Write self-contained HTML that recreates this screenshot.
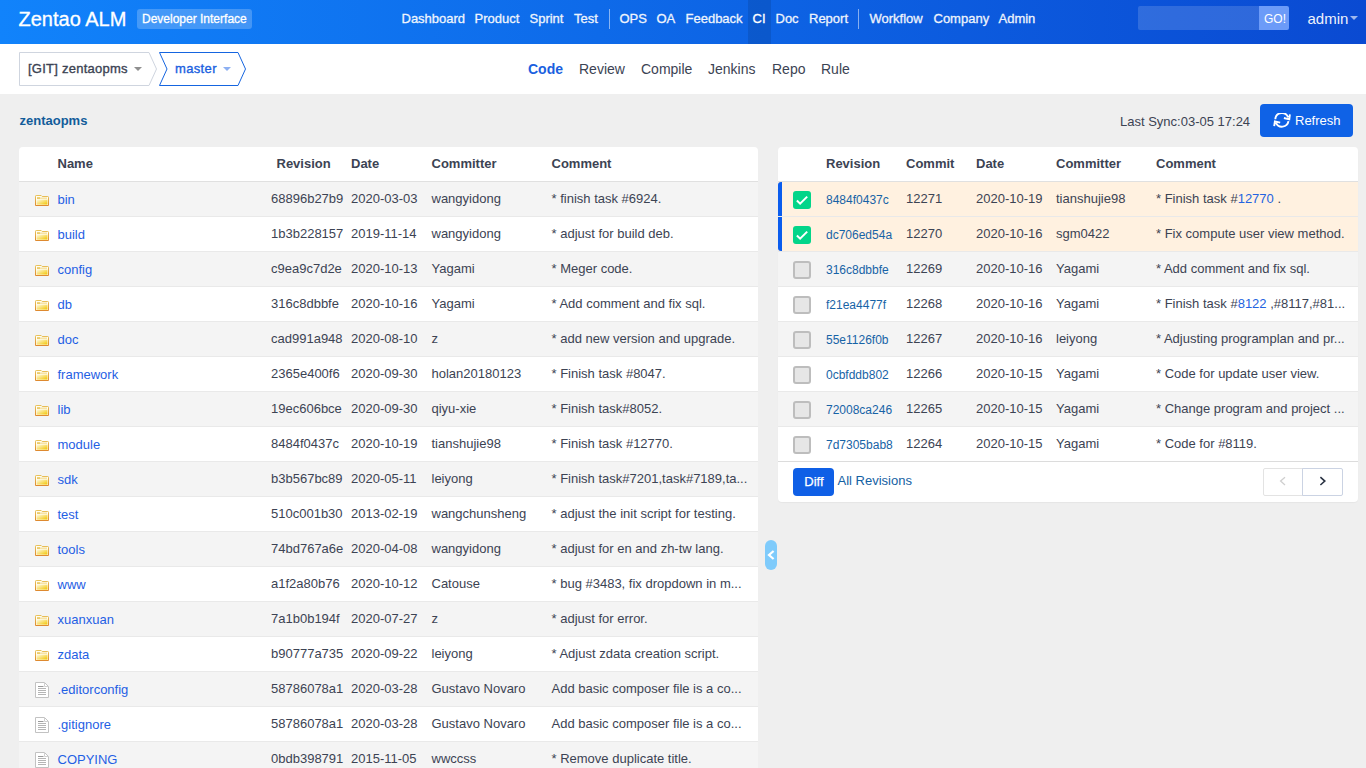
<!DOCTYPE html><html><head><meta charset="utf-8"><title>Zentao ALM - Code</title><style>
*{margin:0;padding:0;box-sizing:border-box}
html,body{width:1366px;height:768px;overflow:hidden}
body{background:#efefef;font-family:"Liberation Sans",sans-serif;position:relative;color:#3c4353}
.t{position:absolute;white-space:nowrap}
#hdr{position:absolute;left:0;top:0;width:1366px;height:44px;background:linear-gradient(90deg,#1183fb 0%,#0a4ad2 100%)}
.badge{position:absolute;left:137px;top:9px;width:115px;height:20px;border-radius:3px;background:rgba(255,255,255,.22)}
.ciact{position:absolute;left:748px;top:0;width:23px;height:44px;background:rgba(0,0,0,.1)}
.sep{position:absolute;top:9px;width:1px;height:20px;background:rgba(255,255,255,.5)}
.search{position:absolute;left:1138px;top:6px;width:121px;height:24px;background:rgba(255,255,255,.15);border-radius:2px 0 0 2px}
.go{position:absolute;left:1259px;top:6px;width:30px;height:24px;background:#6c9bf8;border-radius:0 2px 2px 0}
.caret{position:absolute;width:0;height:0;border-left:4px solid transparent;border-right:4px solid transparent;border-top:4px solid #999}
#sub{position:absolute;left:0;top:44px;width:1366px;height:50px;background:#fff}
.panel{position:absolute;top:147px;background:#fff;border-radius:4px;overflow:hidden}
#lp{left:19px;width:739px;height:640px}
#rp{left:778px;width:580px;height:355px;box-shadow:0 1px 1px rgba(0,0,0,.04)}
.hline{position:absolute;left:0;height:1px;background:#e0e0e0}
.row{position:absolute;left:0;height:35px;border-bottom:1px solid #e9e9e9}
.ico{position:absolute}
.selbar{position:absolute;left:0;width:4px;height:34px;background:#0a5cee}
.chk{position:absolute;width:18px;height:18px;border-radius:3px;background:#e6e6e6;border:2px solid #bdbdbd}
.chk.on{background:#03d589;border:none}
.chk svg{position:absolute;left:0;top:0}
.lk{color:#2463e0}
.btn-refresh{position:absolute;left:1260px;top:104px;width:93px;height:33px;border-radius:4px;background:#0f62e6}
.btn-diff{position:absolute;width:41px;height:28px;border-radius:4px;background:#0f5fe6}
.pager{position:absolute;width:79px;height:28px}
.pg{position:absolute;top:0;width:40px;height:28px;border:1px solid #e3e3e3}
.pl{border-radius:2px 0 0 2px}
.pr{border-radius:0 2px 2px 0;border-color:#cbd3e3}
.handle{position:absolute;left:765px;top:540px;width:12px;height:30px;border-radius:6px;background:#7fcbfb}
.handle svg{position:absolute;left:0;top:0}
</style></head><body><div id="hdr">
<div class="t" style="left:18.5px;top:9px;font-size:20px;line-height:20px;color:#fff;font-weight:normal;-webkit-text-stroke:0.3px #fff;">Zentao ALM</div>
<div class="badge"></div>
<div class="t" style="left:142px;top:13px;font-size:12px;line-height:12px;color:#fff;font-weight:normal;-webkit-text-stroke:0.3px #fff;">Developer Interface</div>
<div class="ciact"></div>
<div class="t" style="left:401.5px;top:12px;font-size:13px;line-height:13px;color:#fff;font-weight:normal;opacity:.93;-webkit-text-stroke:0.3px #fff;">Dashboard</div>
<div class="t" style="left:474.5px;top:12px;font-size:13px;line-height:13px;color:#fff;font-weight:normal;opacity:.93;-webkit-text-stroke:0.3px #fff;">Product</div>
<div class="t" style="left:529.5px;top:12px;font-size:13px;line-height:13px;color:#fff;font-weight:normal;opacity:.93;-webkit-text-stroke:0.3px #fff;">Sprint</div>
<div class="t" style="left:574px;top:12px;font-size:13px;line-height:13px;color:#fff;font-weight:normal;opacity:.93;-webkit-text-stroke:0.3px #fff;">Test</div>
<div class="t" style="left:619.5px;top:12px;font-size:13px;line-height:13px;color:#fff;font-weight:normal;opacity:.93;-webkit-text-stroke:0.3px #fff;">OPS</div>
<div class="t" style="left:656.5px;top:12px;font-size:13px;line-height:13px;color:#fff;font-weight:normal;opacity:.93;-webkit-text-stroke:0.3px #fff;">OA</div>
<div class="t" style="left:685.5px;top:12px;font-size:13px;line-height:13px;color:#fff;font-weight:normal;opacity:.93;-webkit-text-stroke:0.3px #fff;">Feedback</div>
<div class="t" style="left:752.5px;top:12px;font-size:13px;line-height:13px;color:#fff;font-weight:normal;-webkit-text-stroke:0.3px #fff;">CI</div>
<div class="t" style="left:775.5px;top:12px;font-size:13px;line-height:13px;color:#fff;font-weight:normal;opacity:.93;-webkit-text-stroke:0.3px #fff;">Doc</div>
<div class="t" style="left:809px;top:12px;font-size:13px;line-height:13px;color:#fff;font-weight:normal;opacity:.93;-webkit-text-stroke:0.3px #fff;">Report</div>
<div class="t" style="left:869.5px;top:12px;font-size:13px;line-height:13px;color:#fff;font-weight:normal;opacity:.93;-webkit-text-stroke:0.3px #fff;">Workflow</div>
<div class="t" style="left:933.5px;top:12px;font-size:13px;line-height:13px;color:#fff;font-weight:normal;opacity:.93;-webkit-text-stroke:0.3px #fff;">Company</div>
<div class="t" style="left:998.5px;top:12px;font-size:13px;line-height:13px;color:#fff;font-weight:normal;opacity:.93;-webkit-text-stroke:0.3px #fff;">Admin</div>
<div class="sep" style="left:608.5px"></div><div class="sep" style="left:858px"></div>
<div class="search"></div><div class="go"></div>
<div class="t" style="left:1264px;top:13px;font-size:12px;line-height:12px;color:#fff;font-weight:normal;">GO!</div>
<div class="t" style="left:1307.5px;top:11px;font-size:15px;line-height:15px;color:#fff;font-weight:normal;opacity:.93;">admin</div>
<div class="caret" style="left:1350px;top:16px;border-top-color:#9fb8ee"></div>
</div>
<div id="sub">
<svg class="crumbs" width="260" height="50" style="position:absolute;left:0;top:0"><path d="M19.5 8.5 H149 L156.5 25 L149 41.5 H19.5 Z" fill="#fff" stroke="#cfd5df" stroke-width="1"/><path d="M159.5 8.5 H238 L245.5 25 L238 41.5 H159.5 L167 25 Z" fill="#fff" stroke="#1565e0" stroke-width="1"/></svg>
<div class="t" style="left:28px;top:18px;font-size:13px;line-height:13px;color:#3c4353;font-weight:normal;-webkit-text-stroke:0.35px #3c4353;letter-spacing:0.25px;">[GIT] zentaopms</div>
<div class="caret" style="left:134px;top:23px;border-top-color:#8f8f8f"></div>
<div class="t" style="left:175px;top:18px;font-size:13px;line-height:13px;color:#1a5fe0;font-weight:normal;-webkit-text-stroke:0.35px #1a5fe0;letter-spacing:0.35px;">master</div>
<div class="caret" style="left:223px;top:23px;border-top-color:#8db0f2"></div>
<div class="t" style="left:528px;top:18px;font-size:14px;line-height:14px;color:#1a5fe0;font-weight:bold;">Code</div>
<div class="t" style="left:579px;top:18px;font-size:14px;line-height:14px;color:#3c4353;font-weight:normal;">Review</div>
<div class="t" style="left:641px;top:18px;font-size:14px;line-height:14px;color:#3c4353;font-weight:normal;">Compile</div>
<div class="t" style="left:708px;top:18px;font-size:14px;line-height:14px;color:#3c4353;font-weight:normal;">Jenkins</div>
<div class="t" style="left:772px;top:18px;font-size:14px;line-height:14px;color:#3c4353;font-weight:normal;">Repo</div>
<div class="t" style="left:821px;top:18px;font-size:14px;line-height:14px;color:#3c4353;font-weight:normal;">Rule</div>
</div>
<div class="t" style="left:19.5px;top:114px;font-size:13px;line-height:13px;color:#125c9a;font-weight:bold;">zentaopms</div>
<div class="t" style="left:1120px;top:115px;font-size:13px;line-height:13px;color:#3c4353;font-weight:normal;">Last Sync:03-05 17:24</div>
<div class="btn-refresh"><svg width="18" height="15" viewBox="0 0 18 15" style="position:absolute;left:13px;top:9px"><path d="M2.3 6.3 A6.6 6.6 0 0 1 15.1 4.4 M16.9 1.3 L16.3 6.3 L10.9 5.0 M15.5 8.2 A6.6 6.6 0 0 1 2.9 9.6 M1.2 13.2 L1.9 8.4 L7.2 9.6" fill="none" stroke="#fff" stroke-width="1.9"/></svg></div>
<div class="t" style="left:1295px;top:114px;font-size:13px;line-height:13px;color:#fff;font-weight:normal;">Refresh</div>
<div class="panel" id="lp">
<div class="t" style="left:38.5px;top:10px;font-size:13px;line-height:13px;color:#3c4353;font-weight:bold;">Name</div>
<div class="t" style="left:257.5px;top:10px;font-size:13px;line-height:13px;color:#3c4353;font-weight:bold;">Revision</div>
<div class="t" style="left:332px;top:10px;font-size:13px;line-height:13px;color:#3c4353;font-weight:bold;">Date</div>
<div class="t" style="left:412.5px;top:10px;font-size:13px;line-height:13px;color:#3c4353;font-weight:bold;">Committer</div>
<div class="t" style="left:532.5px;top:10px;font-size:13px;line-height:13px;color:#3c4353;font-weight:bold;">Comment</div>
<div class="hline" style="top:34px;width:739px"></div>
<div class="row" style="top:35px;width:739px;background:#f4f4f4"></div>
<svg class="ico" width="14" height="11" viewBox="0 0 14 11" style="left:16px;top:48px"><defs><linearGradient id="fs0" x1="0" y1="0" x2="0" y2="1"><stop offset="0" stop-color="#e8c25a"/><stop offset="1" stop-color="#de8a30"/></linearGradient><linearGradient id="fg0" x1="0" y1="0" x2="1" y2="1"><stop offset="0" stop-color="#fffbe6"/><stop offset="1" stop-color="#f1c400"/></linearGradient></defs><path d="M0.5 10.5 V1.2 Q0.5 0.5 1.2 0.5 H6.2 L7.2 1.5 H12.8 Q13.5 1.5 13.5 2.2 V10.5 Z" fill="#fffdf4" stroke="url(#fs0)" stroke-width="1"/><rect x="2" y="2.6" width="10" height="1.1" fill="#f2d784"/><rect x="2" y="2.2" width="3" height="1.9" fill="#eccb6a"/><rect x="1.5" y="4.6" width="11" height="5" fill="url(#fg0)"/></svg>
<div class="t" style="left:38.5px;top:46px;font-size:13px;line-height:13px;color:#1f60e4;font-weight:normal;">bin</div>
<div class="t" style="left:252px;top:45px;font-size:13px;line-height:13px;color:#3c4353;font-weight:normal;">68896b27b9</div>
<div class="t" style="left:332px;top:45px;font-size:13px;line-height:13px;color:#3c4353;font-weight:normal;">2020-03-03</div>
<div class="t" style="left:412.5px;top:45px;font-size:13px;line-height:13px;color:#3c4353;font-weight:normal;">wangyidong</div>
<div class="t" style="left:532.5px;top:45px;font-size:13px;line-height:13px;color:#3c4353;font-weight:normal;">* finish task #6924.</div>
<div class="row" style="top:70px;width:739px;background:#fff"></div>
<svg class="ico" width="14" height="11" viewBox="0 0 14 11" style="left:16px;top:83px"><defs><linearGradient id="fs1" x1="0" y1="0" x2="0" y2="1"><stop offset="0" stop-color="#e8c25a"/><stop offset="1" stop-color="#de8a30"/></linearGradient><linearGradient id="fg1" x1="0" y1="0" x2="1" y2="1"><stop offset="0" stop-color="#fffbe6"/><stop offset="1" stop-color="#f1c400"/></linearGradient></defs><path d="M0.5 10.5 V1.2 Q0.5 0.5 1.2 0.5 H6.2 L7.2 1.5 H12.8 Q13.5 1.5 13.5 2.2 V10.5 Z" fill="#fffdf4" stroke="url(#fs1)" stroke-width="1"/><rect x="2" y="2.6" width="10" height="1.1" fill="#f2d784"/><rect x="2" y="2.2" width="3" height="1.9" fill="#eccb6a"/><rect x="1.5" y="4.6" width="11" height="5" fill="url(#fg1)"/></svg>
<div class="t" style="left:38.5px;top:81px;font-size:13px;line-height:13px;color:#1f60e4;font-weight:normal;">build</div>
<div class="t" style="left:252px;top:80px;font-size:13px;line-height:13px;color:#3c4353;font-weight:normal;">1b3b228157</div>
<div class="t" style="left:332px;top:80px;font-size:13px;line-height:13px;color:#3c4353;font-weight:normal;">2019-11-14</div>
<div class="t" style="left:412.5px;top:80px;font-size:13px;line-height:13px;color:#3c4353;font-weight:normal;">wangyidong</div>
<div class="t" style="left:532.5px;top:80px;font-size:13px;line-height:13px;color:#3c4353;font-weight:normal;">* adjust for build deb.</div>
<div class="row" style="top:105px;width:739px;background:#f4f4f4"></div>
<svg class="ico" width="14" height="11" viewBox="0 0 14 11" style="left:16px;top:118px"><defs><linearGradient id="fs2" x1="0" y1="0" x2="0" y2="1"><stop offset="0" stop-color="#e8c25a"/><stop offset="1" stop-color="#de8a30"/></linearGradient><linearGradient id="fg2" x1="0" y1="0" x2="1" y2="1"><stop offset="0" stop-color="#fffbe6"/><stop offset="1" stop-color="#f1c400"/></linearGradient></defs><path d="M0.5 10.5 V1.2 Q0.5 0.5 1.2 0.5 H6.2 L7.2 1.5 H12.8 Q13.5 1.5 13.5 2.2 V10.5 Z" fill="#fffdf4" stroke="url(#fs2)" stroke-width="1"/><rect x="2" y="2.6" width="10" height="1.1" fill="#f2d784"/><rect x="2" y="2.2" width="3" height="1.9" fill="#eccb6a"/><rect x="1.5" y="4.6" width="11" height="5" fill="url(#fg2)"/></svg>
<div class="t" style="left:38.5px;top:116px;font-size:13px;line-height:13px;color:#1f60e4;font-weight:normal;">config</div>
<div class="t" style="left:252px;top:115px;font-size:13px;line-height:13px;color:#3c4353;font-weight:normal;">c9ea9c7d2e</div>
<div class="t" style="left:332px;top:115px;font-size:13px;line-height:13px;color:#3c4353;font-weight:normal;">2020-10-13</div>
<div class="t" style="left:412.5px;top:115px;font-size:13px;line-height:13px;color:#3c4353;font-weight:normal;">Yagami</div>
<div class="t" style="left:532.5px;top:115px;font-size:13px;line-height:13px;color:#3c4353;font-weight:normal;">* Meger code.</div>
<div class="row" style="top:140px;width:739px;background:#fff"></div>
<svg class="ico" width="14" height="11" viewBox="0 0 14 11" style="left:16px;top:153px"><defs><linearGradient id="fs3" x1="0" y1="0" x2="0" y2="1"><stop offset="0" stop-color="#e8c25a"/><stop offset="1" stop-color="#de8a30"/></linearGradient><linearGradient id="fg3" x1="0" y1="0" x2="1" y2="1"><stop offset="0" stop-color="#fffbe6"/><stop offset="1" stop-color="#f1c400"/></linearGradient></defs><path d="M0.5 10.5 V1.2 Q0.5 0.5 1.2 0.5 H6.2 L7.2 1.5 H12.8 Q13.5 1.5 13.5 2.2 V10.5 Z" fill="#fffdf4" stroke="url(#fs3)" stroke-width="1"/><rect x="2" y="2.6" width="10" height="1.1" fill="#f2d784"/><rect x="2" y="2.2" width="3" height="1.9" fill="#eccb6a"/><rect x="1.5" y="4.6" width="11" height="5" fill="url(#fg3)"/></svg>
<div class="t" style="left:38.5px;top:151px;font-size:13px;line-height:13px;color:#1f60e4;font-weight:normal;">db</div>
<div class="t" style="left:252px;top:150px;font-size:13px;line-height:13px;color:#3c4353;font-weight:normal;">316c8dbbfe</div>
<div class="t" style="left:332px;top:150px;font-size:13px;line-height:13px;color:#3c4353;font-weight:normal;">2020-10-16</div>
<div class="t" style="left:412.5px;top:150px;font-size:13px;line-height:13px;color:#3c4353;font-weight:normal;">Yagami</div>
<div class="t" style="left:532.5px;top:150px;font-size:13px;line-height:13px;color:#3c4353;font-weight:normal;">* Add comment and fix sql.</div>
<div class="row" style="top:175px;width:739px;background:#f4f4f4"></div>
<svg class="ico" width="14" height="11" viewBox="0 0 14 11" style="left:16px;top:188px"><defs><linearGradient id="fs4" x1="0" y1="0" x2="0" y2="1"><stop offset="0" stop-color="#e8c25a"/><stop offset="1" stop-color="#de8a30"/></linearGradient><linearGradient id="fg4" x1="0" y1="0" x2="1" y2="1"><stop offset="0" stop-color="#fffbe6"/><stop offset="1" stop-color="#f1c400"/></linearGradient></defs><path d="M0.5 10.5 V1.2 Q0.5 0.5 1.2 0.5 H6.2 L7.2 1.5 H12.8 Q13.5 1.5 13.5 2.2 V10.5 Z" fill="#fffdf4" stroke="url(#fs4)" stroke-width="1"/><rect x="2" y="2.6" width="10" height="1.1" fill="#f2d784"/><rect x="2" y="2.2" width="3" height="1.9" fill="#eccb6a"/><rect x="1.5" y="4.6" width="11" height="5" fill="url(#fg4)"/></svg>
<div class="t" style="left:38.5px;top:186px;font-size:13px;line-height:13px;color:#1f60e4;font-weight:normal;">doc</div>
<div class="t" style="left:252px;top:185px;font-size:13px;line-height:13px;color:#3c4353;font-weight:normal;">cad991a948</div>
<div class="t" style="left:332px;top:185px;font-size:13px;line-height:13px;color:#3c4353;font-weight:normal;">2020-08-10</div>
<div class="t" style="left:412.5px;top:185px;font-size:13px;line-height:13px;color:#3c4353;font-weight:normal;">z</div>
<div class="t" style="left:532.5px;top:185px;font-size:13px;line-height:13px;color:#3c4353;font-weight:normal;">* add new version and upgrade.</div>
<div class="row" style="top:210px;width:739px;background:#fff"></div>
<svg class="ico" width="14" height="11" viewBox="0 0 14 11" style="left:16px;top:223px"><defs><linearGradient id="fs5" x1="0" y1="0" x2="0" y2="1"><stop offset="0" stop-color="#e8c25a"/><stop offset="1" stop-color="#de8a30"/></linearGradient><linearGradient id="fg5" x1="0" y1="0" x2="1" y2="1"><stop offset="0" stop-color="#fffbe6"/><stop offset="1" stop-color="#f1c400"/></linearGradient></defs><path d="M0.5 10.5 V1.2 Q0.5 0.5 1.2 0.5 H6.2 L7.2 1.5 H12.8 Q13.5 1.5 13.5 2.2 V10.5 Z" fill="#fffdf4" stroke="url(#fs5)" stroke-width="1"/><rect x="2" y="2.6" width="10" height="1.1" fill="#f2d784"/><rect x="2" y="2.2" width="3" height="1.9" fill="#eccb6a"/><rect x="1.5" y="4.6" width="11" height="5" fill="url(#fg5)"/></svg>
<div class="t" style="left:38.5px;top:221px;font-size:13px;line-height:13px;color:#1f60e4;font-weight:normal;">framework</div>
<div class="t" style="left:252px;top:220px;font-size:13px;line-height:13px;color:#3c4353;font-weight:normal;">2365e400f6</div>
<div class="t" style="left:332px;top:220px;font-size:13px;line-height:13px;color:#3c4353;font-weight:normal;">2020-09-30</div>
<div class="t" style="left:412.5px;top:220px;font-size:13px;line-height:13px;color:#3c4353;font-weight:normal;">holan20180123</div>
<div class="t" style="left:532.5px;top:220px;font-size:13px;line-height:13px;color:#3c4353;font-weight:normal;">* Finish task #8047.</div>
<div class="row" style="top:245px;width:739px;background:#f4f4f4"></div>
<svg class="ico" width="14" height="11" viewBox="0 0 14 11" style="left:16px;top:258px"><defs><linearGradient id="fs6" x1="0" y1="0" x2="0" y2="1"><stop offset="0" stop-color="#e8c25a"/><stop offset="1" stop-color="#de8a30"/></linearGradient><linearGradient id="fg6" x1="0" y1="0" x2="1" y2="1"><stop offset="0" stop-color="#fffbe6"/><stop offset="1" stop-color="#f1c400"/></linearGradient></defs><path d="M0.5 10.5 V1.2 Q0.5 0.5 1.2 0.5 H6.2 L7.2 1.5 H12.8 Q13.5 1.5 13.5 2.2 V10.5 Z" fill="#fffdf4" stroke="url(#fs6)" stroke-width="1"/><rect x="2" y="2.6" width="10" height="1.1" fill="#f2d784"/><rect x="2" y="2.2" width="3" height="1.9" fill="#eccb6a"/><rect x="1.5" y="4.6" width="11" height="5" fill="url(#fg6)"/></svg>
<div class="t" style="left:38.5px;top:256px;font-size:13px;line-height:13px;color:#1f60e4;font-weight:normal;">lib</div>
<div class="t" style="left:252px;top:255px;font-size:13px;line-height:13px;color:#3c4353;font-weight:normal;">19ec606bce</div>
<div class="t" style="left:332px;top:255px;font-size:13px;line-height:13px;color:#3c4353;font-weight:normal;">2020-09-30</div>
<div class="t" style="left:412.5px;top:255px;font-size:13px;line-height:13px;color:#3c4353;font-weight:normal;">qiyu-xie</div>
<div class="t" style="left:532.5px;top:255px;font-size:13px;line-height:13px;color:#3c4353;font-weight:normal;">* Finish task#8052.</div>
<div class="row" style="top:280px;width:739px;background:#fff"></div>
<svg class="ico" width="14" height="11" viewBox="0 0 14 11" style="left:16px;top:293px"><defs><linearGradient id="fs7" x1="0" y1="0" x2="0" y2="1"><stop offset="0" stop-color="#e8c25a"/><stop offset="1" stop-color="#de8a30"/></linearGradient><linearGradient id="fg7" x1="0" y1="0" x2="1" y2="1"><stop offset="0" stop-color="#fffbe6"/><stop offset="1" stop-color="#f1c400"/></linearGradient></defs><path d="M0.5 10.5 V1.2 Q0.5 0.5 1.2 0.5 H6.2 L7.2 1.5 H12.8 Q13.5 1.5 13.5 2.2 V10.5 Z" fill="#fffdf4" stroke="url(#fs7)" stroke-width="1"/><rect x="2" y="2.6" width="10" height="1.1" fill="#f2d784"/><rect x="2" y="2.2" width="3" height="1.9" fill="#eccb6a"/><rect x="1.5" y="4.6" width="11" height="5" fill="url(#fg7)"/></svg>
<div class="t" style="left:38.5px;top:291px;font-size:13px;line-height:13px;color:#1f60e4;font-weight:normal;">module</div>
<div class="t" style="left:252px;top:290px;font-size:13px;line-height:13px;color:#3c4353;font-weight:normal;">8484f0437c</div>
<div class="t" style="left:332px;top:290px;font-size:13px;line-height:13px;color:#3c4353;font-weight:normal;">2020-10-19</div>
<div class="t" style="left:412.5px;top:290px;font-size:13px;line-height:13px;color:#3c4353;font-weight:normal;">tianshujie98</div>
<div class="t" style="left:532.5px;top:290px;font-size:13px;line-height:13px;color:#3c4353;font-weight:normal;">* Finish task #12770.</div>
<div class="row" style="top:315px;width:739px;background:#f4f4f4"></div>
<svg class="ico" width="14" height="11" viewBox="0 0 14 11" style="left:16px;top:328px"><defs><linearGradient id="fs8" x1="0" y1="0" x2="0" y2="1"><stop offset="0" stop-color="#e8c25a"/><stop offset="1" stop-color="#de8a30"/></linearGradient><linearGradient id="fg8" x1="0" y1="0" x2="1" y2="1"><stop offset="0" stop-color="#fffbe6"/><stop offset="1" stop-color="#f1c400"/></linearGradient></defs><path d="M0.5 10.5 V1.2 Q0.5 0.5 1.2 0.5 H6.2 L7.2 1.5 H12.8 Q13.5 1.5 13.5 2.2 V10.5 Z" fill="#fffdf4" stroke="url(#fs8)" stroke-width="1"/><rect x="2" y="2.6" width="10" height="1.1" fill="#f2d784"/><rect x="2" y="2.2" width="3" height="1.9" fill="#eccb6a"/><rect x="1.5" y="4.6" width="11" height="5" fill="url(#fg8)"/></svg>
<div class="t" style="left:38.5px;top:326px;font-size:13px;line-height:13px;color:#1f60e4;font-weight:normal;">sdk</div>
<div class="t" style="left:252px;top:325px;font-size:13px;line-height:13px;color:#3c4353;font-weight:normal;">b3b567bc89</div>
<div class="t" style="left:332px;top:325px;font-size:13px;line-height:13px;color:#3c4353;font-weight:normal;">2020-05-11</div>
<div class="t" style="left:412.5px;top:325px;font-size:13px;line-height:13px;color:#3c4353;font-weight:normal;">leiyong</div>
<div class="t" style="left:532.5px;top:325px;font-size:13px;line-height:13px;color:#3c4353;font-weight:normal;">* Finish task#7201,task#7189,ta...</div>
<div class="row" style="top:350px;width:739px;background:#fff"></div>
<svg class="ico" width="14" height="11" viewBox="0 0 14 11" style="left:16px;top:363px"><defs><linearGradient id="fs9" x1="0" y1="0" x2="0" y2="1"><stop offset="0" stop-color="#e8c25a"/><stop offset="1" stop-color="#de8a30"/></linearGradient><linearGradient id="fg9" x1="0" y1="0" x2="1" y2="1"><stop offset="0" stop-color="#fffbe6"/><stop offset="1" stop-color="#f1c400"/></linearGradient></defs><path d="M0.5 10.5 V1.2 Q0.5 0.5 1.2 0.5 H6.2 L7.2 1.5 H12.8 Q13.5 1.5 13.5 2.2 V10.5 Z" fill="#fffdf4" stroke="url(#fs9)" stroke-width="1"/><rect x="2" y="2.6" width="10" height="1.1" fill="#f2d784"/><rect x="2" y="2.2" width="3" height="1.9" fill="#eccb6a"/><rect x="1.5" y="4.6" width="11" height="5" fill="url(#fg9)"/></svg>
<div class="t" style="left:38.5px;top:361px;font-size:13px;line-height:13px;color:#1f60e4;font-weight:normal;">test</div>
<div class="t" style="left:252px;top:360px;font-size:13px;line-height:13px;color:#3c4353;font-weight:normal;">510c001b30</div>
<div class="t" style="left:332px;top:360px;font-size:13px;line-height:13px;color:#3c4353;font-weight:normal;">2013-02-19</div>
<div class="t" style="left:412.5px;top:360px;font-size:13px;line-height:13px;color:#3c4353;font-weight:normal;">wangchunsheng</div>
<div class="t" style="left:532.5px;top:360px;font-size:13px;line-height:13px;color:#3c4353;font-weight:normal;">* adjust the init script for testing.</div>
<div class="row" style="top:385px;width:739px;background:#f4f4f4"></div>
<svg class="ico" width="14" height="11" viewBox="0 0 14 11" style="left:16px;top:398px"><defs><linearGradient id="fs10" x1="0" y1="0" x2="0" y2="1"><stop offset="0" stop-color="#e8c25a"/><stop offset="1" stop-color="#de8a30"/></linearGradient><linearGradient id="fg10" x1="0" y1="0" x2="1" y2="1"><stop offset="0" stop-color="#fffbe6"/><stop offset="1" stop-color="#f1c400"/></linearGradient></defs><path d="M0.5 10.5 V1.2 Q0.5 0.5 1.2 0.5 H6.2 L7.2 1.5 H12.8 Q13.5 1.5 13.5 2.2 V10.5 Z" fill="#fffdf4" stroke="url(#fs10)" stroke-width="1"/><rect x="2" y="2.6" width="10" height="1.1" fill="#f2d784"/><rect x="2" y="2.2" width="3" height="1.9" fill="#eccb6a"/><rect x="1.5" y="4.6" width="11" height="5" fill="url(#fg10)"/></svg>
<div class="t" style="left:38.5px;top:396px;font-size:13px;line-height:13px;color:#1f60e4;font-weight:normal;">tools</div>
<div class="t" style="left:252px;top:395px;font-size:13px;line-height:13px;color:#3c4353;font-weight:normal;">74bd767a6e</div>
<div class="t" style="left:332px;top:395px;font-size:13px;line-height:13px;color:#3c4353;font-weight:normal;">2020-04-08</div>
<div class="t" style="left:412.5px;top:395px;font-size:13px;line-height:13px;color:#3c4353;font-weight:normal;">wangyidong</div>
<div class="t" style="left:532.5px;top:395px;font-size:13px;line-height:13px;color:#3c4353;font-weight:normal;">* adjust for en and zh-tw lang.</div>
<div class="row" style="top:420px;width:739px;background:#fff"></div>
<svg class="ico" width="14" height="11" viewBox="0 0 14 11" style="left:16px;top:433px"><defs><linearGradient id="fs11" x1="0" y1="0" x2="0" y2="1"><stop offset="0" stop-color="#e8c25a"/><stop offset="1" stop-color="#de8a30"/></linearGradient><linearGradient id="fg11" x1="0" y1="0" x2="1" y2="1"><stop offset="0" stop-color="#fffbe6"/><stop offset="1" stop-color="#f1c400"/></linearGradient></defs><path d="M0.5 10.5 V1.2 Q0.5 0.5 1.2 0.5 H6.2 L7.2 1.5 H12.8 Q13.5 1.5 13.5 2.2 V10.5 Z" fill="#fffdf4" stroke="url(#fs11)" stroke-width="1"/><rect x="2" y="2.6" width="10" height="1.1" fill="#f2d784"/><rect x="2" y="2.2" width="3" height="1.9" fill="#eccb6a"/><rect x="1.5" y="4.6" width="11" height="5" fill="url(#fg11)"/></svg>
<div class="t" style="left:38.5px;top:431px;font-size:13px;line-height:13px;color:#1f60e4;font-weight:normal;">www</div>
<div class="t" style="left:252px;top:430px;font-size:13px;line-height:13px;color:#3c4353;font-weight:normal;">a1f2a80b76</div>
<div class="t" style="left:332px;top:430px;font-size:13px;line-height:13px;color:#3c4353;font-weight:normal;">2020-10-12</div>
<div class="t" style="left:412.5px;top:430px;font-size:13px;line-height:13px;color:#3c4353;font-weight:normal;">Catouse</div>
<div class="t" style="left:532.5px;top:430px;font-size:13px;line-height:13px;color:#3c4353;font-weight:normal;">* bug #3483, fix dropdown in m...</div>
<div class="row" style="top:455px;width:739px;background:#f4f4f4"></div>
<svg class="ico" width="14" height="11" viewBox="0 0 14 11" style="left:16px;top:468px"><defs><linearGradient id="fs12" x1="0" y1="0" x2="0" y2="1"><stop offset="0" stop-color="#e8c25a"/><stop offset="1" stop-color="#de8a30"/></linearGradient><linearGradient id="fg12" x1="0" y1="0" x2="1" y2="1"><stop offset="0" stop-color="#fffbe6"/><stop offset="1" stop-color="#f1c400"/></linearGradient></defs><path d="M0.5 10.5 V1.2 Q0.5 0.5 1.2 0.5 H6.2 L7.2 1.5 H12.8 Q13.5 1.5 13.5 2.2 V10.5 Z" fill="#fffdf4" stroke="url(#fs12)" stroke-width="1"/><rect x="2" y="2.6" width="10" height="1.1" fill="#f2d784"/><rect x="2" y="2.2" width="3" height="1.9" fill="#eccb6a"/><rect x="1.5" y="4.6" width="11" height="5" fill="url(#fg12)"/></svg>
<div class="t" style="left:38.5px;top:466px;font-size:13px;line-height:13px;color:#1f60e4;font-weight:normal;">xuanxuan</div>
<div class="t" style="left:252px;top:465px;font-size:13px;line-height:13px;color:#3c4353;font-weight:normal;">7a1b0b194f</div>
<div class="t" style="left:332px;top:465px;font-size:13px;line-height:13px;color:#3c4353;font-weight:normal;">2020-07-27</div>
<div class="t" style="left:412.5px;top:465px;font-size:13px;line-height:13px;color:#3c4353;font-weight:normal;">z</div>
<div class="t" style="left:532.5px;top:465px;font-size:13px;line-height:13px;color:#3c4353;font-weight:normal;">* adjust for error.</div>
<div class="row" style="top:490px;width:739px;background:#fff"></div>
<svg class="ico" width="14" height="11" viewBox="0 0 14 11" style="left:16px;top:503px"><defs><linearGradient id="fs13" x1="0" y1="0" x2="0" y2="1"><stop offset="0" stop-color="#e8c25a"/><stop offset="1" stop-color="#de8a30"/></linearGradient><linearGradient id="fg13" x1="0" y1="0" x2="1" y2="1"><stop offset="0" stop-color="#fffbe6"/><stop offset="1" stop-color="#f1c400"/></linearGradient></defs><path d="M0.5 10.5 V1.2 Q0.5 0.5 1.2 0.5 H6.2 L7.2 1.5 H12.8 Q13.5 1.5 13.5 2.2 V10.5 Z" fill="#fffdf4" stroke="url(#fs13)" stroke-width="1"/><rect x="2" y="2.6" width="10" height="1.1" fill="#f2d784"/><rect x="2" y="2.2" width="3" height="1.9" fill="#eccb6a"/><rect x="1.5" y="4.6" width="11" height="5" fill="url(#fg13)"/></svg>
<div class="t" style="left:38.5px;top:501px;font-size:13px;line-height:13px;color:#1f60e4;font-weight:normal;">zdata</div>
<div class="t" style="left:252px;top:500px;font-size:13px;line-height:13px;color:#3c4353;font-weight:normal;">b90777a735</div>
<div class="t" style="left:332px;top:500px;font-size:13px;line-height:13px;color:#3c4353;font-weight:normal;">2020-09-22</div>
<div class="t" style="left:412.5px;top:500px;font-size:13px;line-height:13px;color:#3c4353;font-weight:normal;">leiyong</div>
<div class="t" style="left:532.5px;top:500px;font-size:13px;line-height:13px;color:#3c4353;font-weight:normal;">* Adjust zdata creation script.</div>
<div class="row" style="top:525px;width:739px;background:#f4f4f4"></div>
<svg class="ico" width="14" height="16" viewBox="0 0 14 16" style="left:16px;top:535px"><path d="M0.5 0.5 H9.5 L13.5 4.5 V15.5 H0.5 Z" fill="#fff" stroke="#c2c2c2" stroke-width="1"/><path d="M9.5 0.5 V4.5 H13.5" fill="none" stroke="#d0d0d0" stroke-width="1"/><path d="M3 4.5 H8.5" stroke="#999" stroke-width="1"/><path d="M3 6.5 H11 M3 8.5 H11 M3 10.5 H11 M3 12.5 H11" stroke="#b5b5b5" stroke-width="1"/></svg>
<div class="t" style="left:38.5px;top:536px;font-size:13px;line-height:13px;color:#1f60e4;font-weight:normal;">.editorconfig</div>
<div class="t" style="left:252px;top:535px;font-size:13px;line-height:13px;color:#3c4353;font-weight:normal;">58786078a1</div>
<div class="t" style="left:332px;top:535px;font-size:13px;line-height:13px;color:#3c4353;font-weight:normal;">2020-03-28</div>
<div class="t" style="left:412.5px;top:535px;font-size:13px;line-height:13px;color:#3c4353;font-weight:normal;">Gustavo Novaro</div>
<div class="t" style="left:532.5px;top:535px;font-size:13px;line-height:13px;color:#3c4353;font-weight:normal;">Add basic composer file is a co...</div>
<div class="row" style="top:560px;width:739px;background:#fff"></div>
<svg class="ico" width="14" height="16" viewBox="0 0 14 16" style="left:16px;top:570px"><path d="M0.5 0.5 H9.5 L13.5 4.5 V15.5 H0.5 Z" fill="#fff" stroke="#c2c2c2" stroke-width="1"/><path d="M9.5 0.5 V4.5 H13.5" fill="none" stroke="#d0d0d0" stroke-width="1"/><path d="M3 4.5 H8.5" stroke="#999" stroke-width="1"/><path d="M3 6.5 H11 M3 8.5 H11 M3 10.5 H11 M3 12.5 H11" stroke="#b5b5b5" stroke-width="1"/></svg>
<div class="t" style="left:38.5px;top:571px;font-size:13px;line-height:13px;color:#1f60e4;font-weight:normal;">.gitignore</div>
<div class="t" style="left:252px;top:570px;font-size:13px;line-height:13px;color:#3c4353;font-weight:normal;">58786078a1</div>
<div class="t" style="left:332px;top:570px;font-size:13px;line-height:13px;color:#3c4353;font-weight:normal;">2020-03-28</div>
<div class="t" style="left:412.5px;top:570px;font-size:13px;line-height:13px;color:#3c4353;font-weight:normal;">Gustavo Novaro</div>
<div class="t" style="left:532.5px;top:570px;font-size:13px;line-height:13px;color:#3c4353;font-weight:normal;">Add basic composer file is a co...</div>
<div class="row" style="top:595px;width:739px;background:#f4f4f4"></div>
<svg class="ico" width="14" height="16" viewBox="0 0 14 16" style="left:16px;top:605px"><path d="M0.5 0.5 H9.5 L13.5 4.5 V15.5 H0.5 Z" fill="#fff" stroke="#c2c2c2" stroke-width="1"/><path d="M9.5 0.5 V4.5 H13.5" fill="none" stroke="#d0d0d0" stroke-width="1"/><path d="M3 4.5 H8.5" stroke="#999" stroke-width="1"/><path d="M3 6.5 H11 M3 8.5 H11 M3 10.5 H11 M3 12.5 H11" stroke="#b5b5b5" stroke-width="1"/></svg>
<div class="t" style="left:38.5px;top:606px;font-size:13px;line-height:13px;color:#1f60e4;font-weight:normal;">COPYING</div>
<div class="t" style="left:252px;top:605px;font-size:13px;line-height:13px;color:#3c4353;font-weight:normal;">0bdb398791</div>
<div class="t" style="left:332px;top:605px;font-size:13px;line-height:13px;color:#3c4353;font-weight:normal;">2015-11-05</div>
<div class="t" style="left:412.5px;top:605px;font-size:13px;line-height:13px;color:#3c4353;font-weight:normal;">wwccss</div>
<div class="t" style="left:532.5px;top:605px;font-size:13px;line-height:13px;color:#3c4353;font-weight:normal;">* Remove duplicate title.</div>
</div>
<div class="panel" id="rp">
<div class="t" style="left:48px;top:10px;font-size:13px;line-height:13px;color:#3c4353;font-weight:bold;">Revision</div>
<div class="t" style="left:128px;top:10px;font-size:13px;line-height:13px;color:#3c4353;font-weight:bold;">Commit</div>
<div class="t" style="left:198px;top:10px;font-size:13px;line-height:13px;color:#3c4353;font-weight:bold;">Date</div>
<div class="t" style="left:278px;top:10px;font-size:13px;line-height:13px;color:#3c4353;font-weight:bold;">Committer</div>
<div class="t" style="left:378px;top:10px;font-size:13px;line-height:13px;color:#3c4353;font-weight:bold;">Comment</div>
<div class="hline" style="top:34px;width:580px"></div>
<div class="row" style="top:35px;width:580px;background:#fff1e0"></div>
<div class="selbar" style="top:35px;border-radius:3px 0 0 0"></div>
<div class="chk on" style="left:15px;top:44px"><svg width="18" height="18" viewBox="0 0 18 18"><path d="M3.9 9.5 L7.1 12.6 L14.2 5.6" fill="none" stroke="#fff" stroke-width="2"/></svg></div>
<div class="t" style="left:48px;top:47px;font-size:12px;line-height:12px;color:#1763a6;font-weight:normal;">8484f0437c</div>
<div class="t" style="left:128px;top:45px;font-size:13px;line-height:13px;color:#3c4353;font-weight:normal;">12271</div>
<div class="t" style="left:198px;top:45px;font-size:13px;line-height:13px;color:#3c4353;font-weight:normal;">2020-10-19</div>
<div class="t" style="left:278px;top:45px;font-size:13px;line-height:13px;color:#3c4353;font-weight:normal;">tianshujie98</div>
<div class="t" style="left:378px;top:45px;font-size:13px;line-height:13px;color:#3c4353;font-weight:normal;">* Finish task #<span class="lk">12770</span> .</div>
<div class="row" style="top:70px;width:580px;background:#fff1e0"></div>
<div class="selbar" style="top:70px;border-radius:0 0 0 3px"></div>
<div class="chk on" style="left:15px;top:79px"><svg width="18" height="18" viewBox="0 0 18 18"><path d="M3.9 9.5 L7.1 12.6 L14.2 5.6" fill="none" stroke="#fff" stroke-width="2"/></svg></div>
<div class="t" style="left:48px;top:82px;font-size:12px;line-height:12px;color:#1763a6;font-weight:normal;">dc706ed54a</div>
<div class="t" style="left:128px;top:80px;font-size:13px;line-height:13px;color:#3c4353;font-weight:normal;">12270</div>
<div class="t" style="left:198px;top:80px;font-size:13px;line-height:13px;color:#3c4353;font-weight:normal;">2020-10-16</div>
<div class="t" style="left:278px;top:80px;font-size:13px;line-height:13px;color:#3c4353;font-weight:normal;">sgm0422</div>
<div class="t" style="left:378px;top:80px;font-size:13px;line-height:13px;color:#3c4353;font-weight:normal;">* Fix compute user view method.</div>
<div class="row" style="top:105px;width:580px;background:#f4f4f4"></div>
<div class="chk" style="left:15px;top:114px"></div>
<div class="t" style="left:48px;top:117px;font-size:12px;line-height:12px;color:#1763a6;font-weight:normal;">316c8dbbfe</div>
<div class="t" style="left:128px;top:115px;font-size:13px;line-height:13px;color:#3c4353;font-weight:normal;">12269</div>
<div class="t" style="left:198px;top:115px;font-size:13px;line-height:13px;color:#3c4353;font-weight:normal;">2020-10-16</div>
<div class="t" style="left:278px;top:115px;font-size:13px;line-height:13px;color:#3c4353;font-weight:normal;">Yagami</div>
<div class="t" style="left:378px;top:115px;font-size:13px;line-height:13px;color:#3c4353;font-weight:normal;">* Add comment and fix sql.</div>
<div class="row" style="top:140px;width:580px;background:#fff"></div>
<div class="chk" style="left:15px;top:149px"></div>
<div class="t" style="left:48px;top:152px;font-size:12px;line-height:12px;color:#1763a6;font-weight:normal;">f21ea4477f</div>
<div class="t" style="left:128px;top:150px;font-size:13px;line-height:13px;color:#3c4353;font-weight:normal;">12268</div>
<div class="t" style="left:198px;top:150px;font-size:13px;line-height:13px;color:#3c4353;font-weight:normal;">2020-10-16</div>
<div class="t" style="left:278px;top:150px;font-size:13px;line-height:13px;color:#3c4353;font-weight:normal;">Yagami</div>
<div class="t" style="left:378px;top:150px;font-size:13px;line-height:13px;color:#3c4353;font-weight:normal;">* Finish task #<span class="lk">8122</span> ,#8117,#81...</div>
<div class="row" style="top:175px;width:580px;background:#f4f4f4"></div>
<div class="chk" style="left:15px;top:184px"></div>
<div class="t" style="left:48px;top:187px;font-size:12px;line-height:12px;color:#1763a6;font-weight:normal;">55e1126f0b</div>
<div class="t" style="left:128px;top:185px;font-size:13px;line-height:13px;color:#3c4353;font-weight:normal;">12267</div>
<div class="t" style="left:198px;top:185px;font-size:13px;line-height:13px;color:#3c4353;font-weight:normal;">2020-10-16</div>
<div class="t" style="left:278px;top:185px;font-size:13px;line-height:13px;color:#3c4353;font-weight:normal;">leiyong</div>
<div class="t" style="left:378px;top:185px;font-size:13px;line-height:13px;color:#3c4353;font-weight:normal;">* Adjusting programplan and pr...</div>
<div class="row" style="top:210px;width:580px;background:#fff"></div>
<div class="chk" style="left:15px;top:219px"></div>
<div class="t" style="left:48px;top:222px;font-size:12px;line-height:12px;color:#1763a6;font-weight:normal;">0cbfddb802</div>
<div class="t" style="left:128px;top:220px;font-size:13px;line-height:13px;color:#3c4353;font-weight:normal;">12266</div>
<div class="t" style="left:198px;top:220px;font-size:13px;line-height:13px;color:#3c4353;font-weight:normal;">2020-10-15</div>
<div class="t" style="left:278px;top:220px;font-size:13px;line-height:13px;color:#3c4353;font-weight:normal;">Yagami</div>
<div class="t" style="left:378px;top:220px;font-size:13px;line-height:13px;color:#3c4353;font-weight:normal;">* Code for update user view.</div>
<div class="row" style="top:245px;width:580px;background:#f4f4f4"></div>
<div class="chk" style="left:15px;top:254px"></div>
<div class="t" style="left:48px;top:257px;font-size:12px;line-height:12px;color:#1763a6;font-weight:normal;">72008ca246</div>
<div class="t" style="left:128px;top:255px;font-size:13px;line-height:13px;color:#3c4353;font-weight:normal;">12265</div>
<div class="t" style="left:198px;top:255px;font-size:13px;line-height:13px;color:#3c4353;font-weight:normal;">2020-10-15</div>
<div class="t" style="left:278px;top:255px;font-size:13px;line-height:13px;color:#3c4353;font-weight:normal;">Yagami</div>
<div class="t" style="left:378px;top:255px;font-size:13px;line-height:13px;color:#3c4353;font-weight:normal;">* Change program and project ...</div>
<div class="row" style="top:280px;width:580px;background:#fff"></div>
<div class="chk" style="left:15px;top:289px"></div>
<div class="t" style="left:48px;top:292px;font-size:12px;line-height:12px;color:#1763a6;font-weight:normal;">7d7305bab8</div>
<div class="t" style="left:128px;top:290px;font-size:13px;line-height:13px;color:#3c4353;font-weight:normal;">12264</div>
<div class="t" style="left:198px;top:290px;font-size:13px;line-height:13px;color:#3c4353;font-weight:normal;">2020-10-15</div>
<div class="t" style="left:278px;top:290px;font-size:13px;line-height:13px;color:#3c4353;font-weight:normal;">Yagami</div>
<div class="t" style="left:378px;top:290px;font-size:13px;line-height:13px;color:#3c4353;font-weight:normal;">* Code for #8119.</div>
<div class="hline" style="top:314px;width:580px;background:#dcdcdc"></div>
<div class="btn-diff" style="left:15px;top:321px"></div>
<div class="t" style="left:26.299999999999955px;top:328px;font-size:13px;line-height:13px;color:#fff;font-weight:normal;-webkit-text-stroke:0.25px #fff;">Diff</div>
<div class="t" style="left:59.5px;top:327px;font-size:13px;line-height:13px;color:#1461a3;font-weight:normal;">All Revisions</div>
<div class="pager" style="left:485px;top:321px"><div class="pg pl" style="left:0"></div><div class="pg pr" style="left:39px;width:41px"></div><svg width="12" height="14" viewBox="0 0 12 14" style="position:absolute;left:14px;top:6px"><path d="M8 3.2 L3.6 7.1 L8 11" fill="none" stroke="#cfcfcf" stroke-width="1.3"/></svg><svg width="12" height="14" viewBox="0 0 12 14" style="position:absolute;left:53px;top:6px"><path d="M4.4 3.2 L8.8 7.1 L4.4 11" fill="none" stroke="#2b3444" stroke-width="1.6"/></svg></div>
</div>
<div class="handle"><svg width="12" height="30" viewBox="0 0 12 30"><path d="M8.6 11 L4 15 L8.6 19" fill="none" stroke="#fff" stroke-width="2.2"/></svg></div></body></html>
